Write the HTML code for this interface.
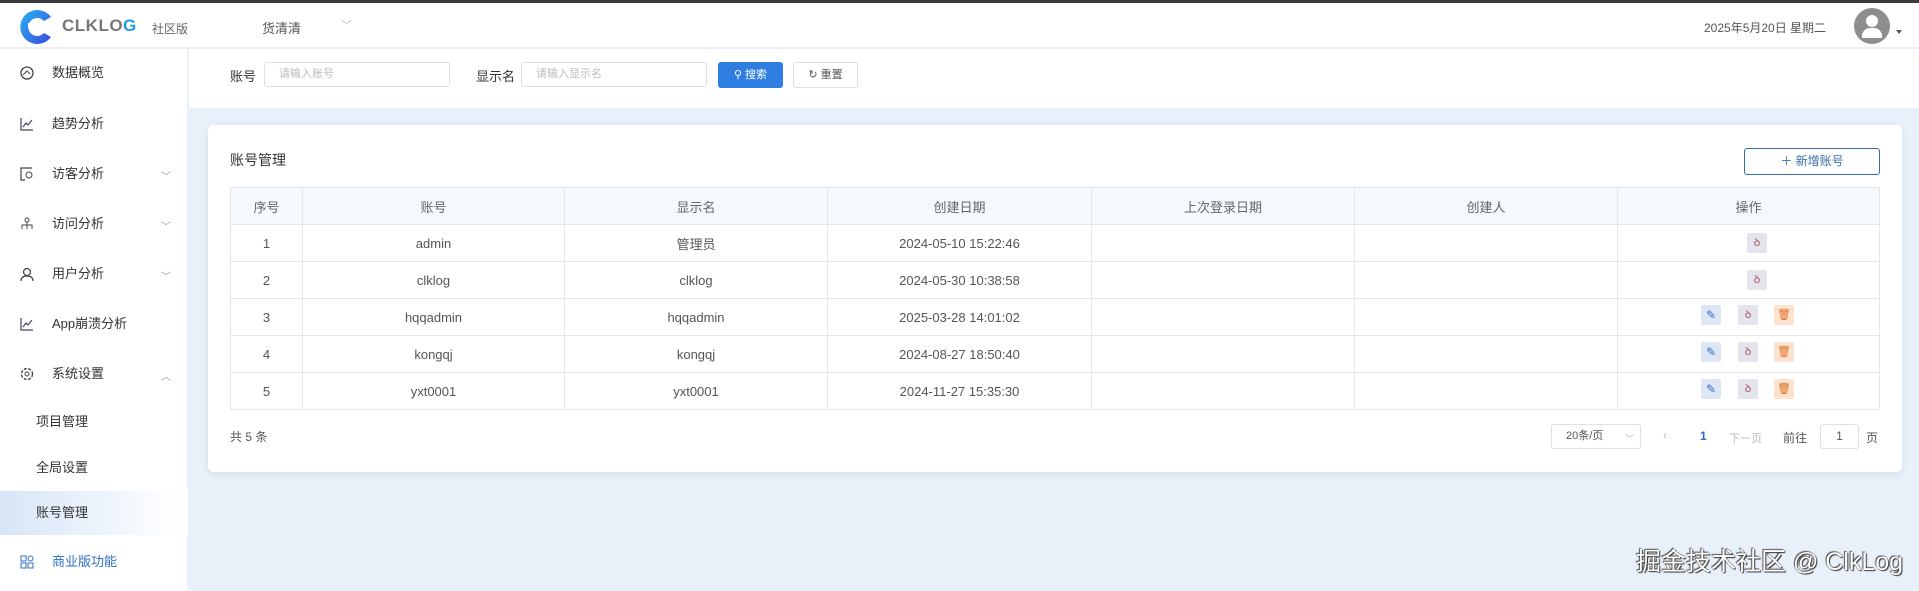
<!DOCTYPE html>
<html><head><meta charset="utf-8"><style>
*{margin:0;padding:0;box-sizing:border-box}
body{width:1919px;height:591px;overflow:hidden;background:#e8f1fa;font-family:"Liberation Sans","Noto Sans CJK SC",sans-serif;color:#333;position:relative;font-size:14px}
.abs{position:absolute}
.top{left:0;top:0;width:1919px;height:3px;background:#3a3a3a}
.hdr{left:0;top:3px;width:1919px;height:45px;background:#fff;border-bottom:1px solid #eceff3}
.side{left:0;top:49px;width:188px;height:542px;background:#fff;border-right:1px solid #eef0f3}
.filter{left:189px;top:49px;width:1730px;height:59px;background:#fff}
.mi{position:absolute;left:0;width:188px;height:36px;line-height:36px;font-size:13px;color:#333}
.mi .ic{position:absolute;left:20px;top:11px;width:14px;height:14px}
.mi .t{position:absolute;left:52px}
.mi .ch{position:absolute;left:161px;top:4px;color:#999;font-size:10px}
.card{left:208px;top:125px;width:1694px;height:347px;background:#fff;border-radius:6px;box-shadow:0 2px 8px rgba(0,0,0,.08)}
table{position:absolute;left:230px;top:187px;border-collapse:collapse;font-size:13px;color:#555}
td,th{border:1px solid #e3e7ec;text-align:center;height:37px;font-weight:normal}
th{background:#f5f8fc;color:#666}
.btn{position:absolute;display:inline-block;width:20px;height:20px;border-radius:2px}
.inp{position:absolute;height:25px;border:1px solid #dcdfe6;border-radius:3px;font-size:11px;color:#bbb;line-height:23px;padding-left:14px;background:#fff}
</style></head><body>
<div class="abs top"></div>
<div class="abs hdr">
 <svg class="abs" style="left:18px;top:5px" width="38" height="38" viewBox="0 0 38 38"><defs><linearGradient id="g" x1="0" y1="0" x2="1" y2="1"><stop offset="0" stop-color="#28b4f0"/><stop offset="1" stop-color="#3a4ae0"/></linearGradient></defs><path d="M33 9 A17 17 0 1 0 33 29 L26 25 A9 9 0 1 1 26 13 Z" fill="url(#g)"/><rect x="10" y="15" width="5" height="5" fill="#fff"/><rect x="16" y="20" width="5" height="5" fill="#fff"/><rect x="21" y="14" width="4" height="4" fill="#fff"/></svg>
 <div class="abs" style="left:62px;top:13px;font-size:17px;letter-spacing:0.5px;color:#777;font-weight:bold">CLKLO<span style="color:#1d9be0">G</span></div>
 <div class="abs" style="left:152px;top:17px;font-size:12px;color:#666">社区版</div>
 <div class="abs" style="left:262px;top:15px;font-size:13px;color:#555">货清清</div>
 <div class="abs" style="left:341px;top:14px;font-size:11px;color:#bbb">﹀</div>
 <div class="abs" style="left:1704px;top:16px;font-size:12px;color:#555">2025年5月20日 星期二</div>
 <div class="abs" style="left:1854px;top:5px;width:36px;height:36px;border-radius:50%;background:#8e8e8e;overflow:hidden"><div class="abs" style="left:12px;top:7px;width:12px;height:12px;border-radius:50%;background:#fff"></div><div class="abs" style="left:8px;top:20px;width:20px;height:10px;border-radius:8px 8px 0 0;background:#fff"></div></div>
 <div class="abs" style="left:1896px;top:27px;width:0;height:0;border-left:3px solid transparent;border-right:3px solid transparent;border-top:4px solid #555"></div>
</div>
<div class="abs side">
 <div class="mi" style="top:6px"><svg class="ic" viewBox="0 0 14 14"><circle cx="7" cy="7" r="6" fill="none" stroke="#444" stroke-width="1.3"/><path d="M3 9 L7 5 L10 8" stroke="#444" fill="none"/></svg><span class="t">数据概览</span></div>
 <div class="mi" style="top:57px"><svg class="ic" viewBox="0 0 14 14"><path d="M1 1V13H13M3 10L6 6L8 8L12 3" stroke="#446" fill="none" stroke-width="1.2"/></svg><span class="t">趋势分析</span></div>
 <div class="mi" style="top:107px"><svg class="ic" viewBox="0 0 14 14"><path d="M12 1H1V13H5" stroke="#444" fill="none" stroke-width="1.2"/><circle cx="9" cy="8" r="3" stroke="#444" fill="none"/></svg><span class="t">访客分析</span><span class="ch">﹀</span></div>
 <div class="mi" style="top:157px"><svg class="ic" viewBox="0 0 14 14"><circle cx="7" cy="3" r="2" stroke="#444" fill="none"/><path d="M2 12V8H12V12M7 5V12" stroke="#444" fill="none"/></svg><span class="t">访问分析</span><span class="ch">﹀</span></div>
 <div class="mi" style="top:207px"><svg class="ic" viewBox="0 0 14 14"><circle cx="7" cy="5" r="3.5" stroke="#444" fill="none" stroke-width="1.2"/><path d="M1 14C1 10 4 9 7 9S13 10 13 14" stroke="#444" fill="none" stroke-width="1.2"/></svg><span class="t">用户分析</span><span class="ch">﹀</span></div>
 <div class="mi" style="top:257px"><svg class="ic" viewBox="0 0 14 14"><path d="M1 1V13H13M3 10L6 6L8 8L12 3" stroke="#446" fill="none" stroke-width="1.2"/></svg><span class="t">App崩溃分析</span></div>
 <div class="mi" style="top:307px"><svg class="ic" viewBox="0 0 14 14"><circle cx="7" cy="7" r="5.5" stroke="#444" fill="none" stroke-dasharray="3 1.5" stroke-width="1.4"/><circle cx="7" cy="7" r="2" stroke="#444" fill="none"/></svg><span class="t">系统设置</span><span class="ch">︿</span></div>
 <div class="mi" style="top:355px"><span class="t" style="left:36px">项目管理</span></div>
 <div class="mi" style="top:401px"><span class="t" style="left:36px">全局设置</span></div>
 <div class="mi" style="top:442px;height:44px;line-height:44px;background:linear-gradient(90deg,#d6e5f7,#fff 95%)"><span class="t" style="left:36px">账号管理</span></div>
 <div class="mi" style="top:495px;color:#2f6fc4"><svg class="ic" viewBox="0 0 14 14"><rect x="1" y="1" width="5" height="5" stroke="#2f6fc4" fill="none"/><rect x="1" y="8" width="5" height="5" stroke="#2f6fc4" fill="none"/><rect x="8" y="8" width="5" height="5" stroke="#2f6fc4" fill="none"/><circle cx="10.5" cy="3.5" r="2.5" stroke="#2f6fc4" fill="none"/></svg><span class="t">商业版功能</span></div>
</div>
<div class="abs filter">
 <div class="abs" style="left:41px;top:17px;font-size:13px">账号</div>
 <div class="inp" style="left:75px;top:13px;width:186px">请输入账号</div>
 <div class="abs" style="left:287px;top:17px;font-size:13px">显示名</div>
 <div class="inp" style="left:332px;top:13px;width:186px">请输入显示名</div>
 <div class="abs" style="left:529px;top:13px;width:65px;height:26px;background:#2d7ee0;border-radius:3px;color:#fff;font-size:11px;line-height:26px;text-align:center">⚲ 搜索</div>
 <div class="abs" style="left:604px;top:13px;width:65px;height:26px;border:1px solid #dcdfe6;border-radius:3px;color:#555;font-size:11px;line-height:24px;text-align:center;background:#fff">↻ 重置</div>
</div>
<div class="abs card"></div>
<div class="abs" style="left:230px;top:150px;font-size:14px;color:#333">账号管理</div>
<div class="abs" style="left:1744px;top:148px;width:136px;height:27px;border:1px solid #3a6ea8;border-radius:3px;color:#3a6ea8;font-size:12px;line-height:25px;text-align:center">＋ 新增账号</div>
<table>
<tr><th style="width:72px">序号</th><th style="width:262px">账号</th><th style="width:263px">显示名</th><th style="width:264px">创建日期</th><th style="width:263px">上次登录日期</th><th style="width:263px">创建人</th><th style="width:262px">操作</th></tr>
<tr><td>1</td><td>admin</td><td>管理员</td><td>2024-05-10 15:22:46</td><td></td><td></td><td></td></tr>
<tr><td>2</td><td>clklog</td><td>clklog</td><td>2024-05-30 10:38:58</td><td></td><td></td><td></td></tr>
<tr><td>3</td><td>hqqadmin</td><td>hqqadmin</td><td>2025-03-28 14:01:02</td><td></td><td></td><td></td></tr>
<tr><td>4</td><td>kongqj</td><td>kongqj</td><td>2024-08-27 18:50:40</td><td></td><td></td><td></td></tr>
<tr><td>5</td><td>yxt0001</td><td>yxt0001</td><td>2024-11-27 15:35:30</td><td></td><td></td><td></td></tr>
</table>
<div class="btn" style="left:1747px;top:233px;background:#e3e4ec;color:#a56;font-size:11px;text-align:center;line-height:20px">ꝺ</div>
<div class="btn" style="left:1747px;top:270px;background:#e3e4ec;color:#a56;font-size:11px;text-align:center;line-height:20px">ꝺ</div>
<div class="btn" style="left:1701px;top:305px;background:#dde6f5;color:#3a6ad0;font-size:12px;text-align:center;line-height:20px">✎</div>
<div class="btn" style="left:1738px;top:305px;background:#e3e4ec;color:#a56;font-size:11px;text-align:center;line-height:20px">ꝺ</div>
<div class="btn" style="left:1774px;top:305px;background:#fde3cf;color:#e0702a;font-size:11px;text-align:center;line-height:20px">🗑</div>
<div class="btn" style="left:1701px;top:342px;background:#dde6f5;color:#3a6ad0;font-size:12px;text-align:center;line-height:20px">✎</div>
<div class="btn" style="left:1738px;top:342px;background:#e3e4ec;color:#a56;font-size:11px;text-align:center;line-height:20px">ꝺ</div>
<div class="btn" style="left:1774px;top:342px;background:#fde3cf;color:#e0702a;font-size:11px;text-align:center;line-height:20px">🗑</div>
<div class="btn" style="left:1701px;top:379px;background:#dde6f5;color:#3a6ad0;font-size:12px;text-align:center;line-height:20px">✎</div>
<div class="btn" style="left:1738px;top:379px;background:#e3e4ec;color:#a56;font-size:11px;text-align:center;line-height:20px">ꝺ</div>
<div class="btn" style="left:1774px;top:379px;background:#fde3cf;color:#e0702a;font-size:11px;text-align:center;line-height:20px">🗑</div>
<div class="abs" style="left:230px;top:428px;font-size:12px;color:#555">共 5 条</div>
<div class="abs" style="left:1551px;top:424px;width:90px;height:25px;border:1px solid #dcdfe6;border-radius:3px;font-size:11px;color:#555;line-height:23px;padding-left:14px">20条/页<span style="position:absolute;right:6px;top:3px;color:#bbb;font-size:9px">﹀</span></div>
<div class="abs" style="left:1663px;top:428px;font-size:12px;color:#bbb">‹</div>
<div class="abs" style="left:1700px;top:429px;font-size:12px;color:#2d6ccc;font-weight:bold">1</div>
<div class="abs" style="left:1729px;top:430px;font-size:11px;color:#bbb">下一页</div>
<div class="abs" style="left:1783px;top:429px;font-size:12px;color:#555">前往</div>
<div class="abs" style="left:1820px;top:424px;width:39px;height:25px;border:1px solid #dcdfe6;border-radius:3px;font-size:12px;text-align:center;line-height:23px;color:#555">1</div>
<div class="abs" style="left:1866px;top:429px;font-size:12px;color:#555">页</div>
<div class="abs" style="left:1636px;top:542px;font-size:25px;color:#fff;text-shadow:0 0 1px #333,1px 1px 1px #333,-1px -1px 1px #555">掘金技术社区 @ ClkLog</div>
</body></html>
